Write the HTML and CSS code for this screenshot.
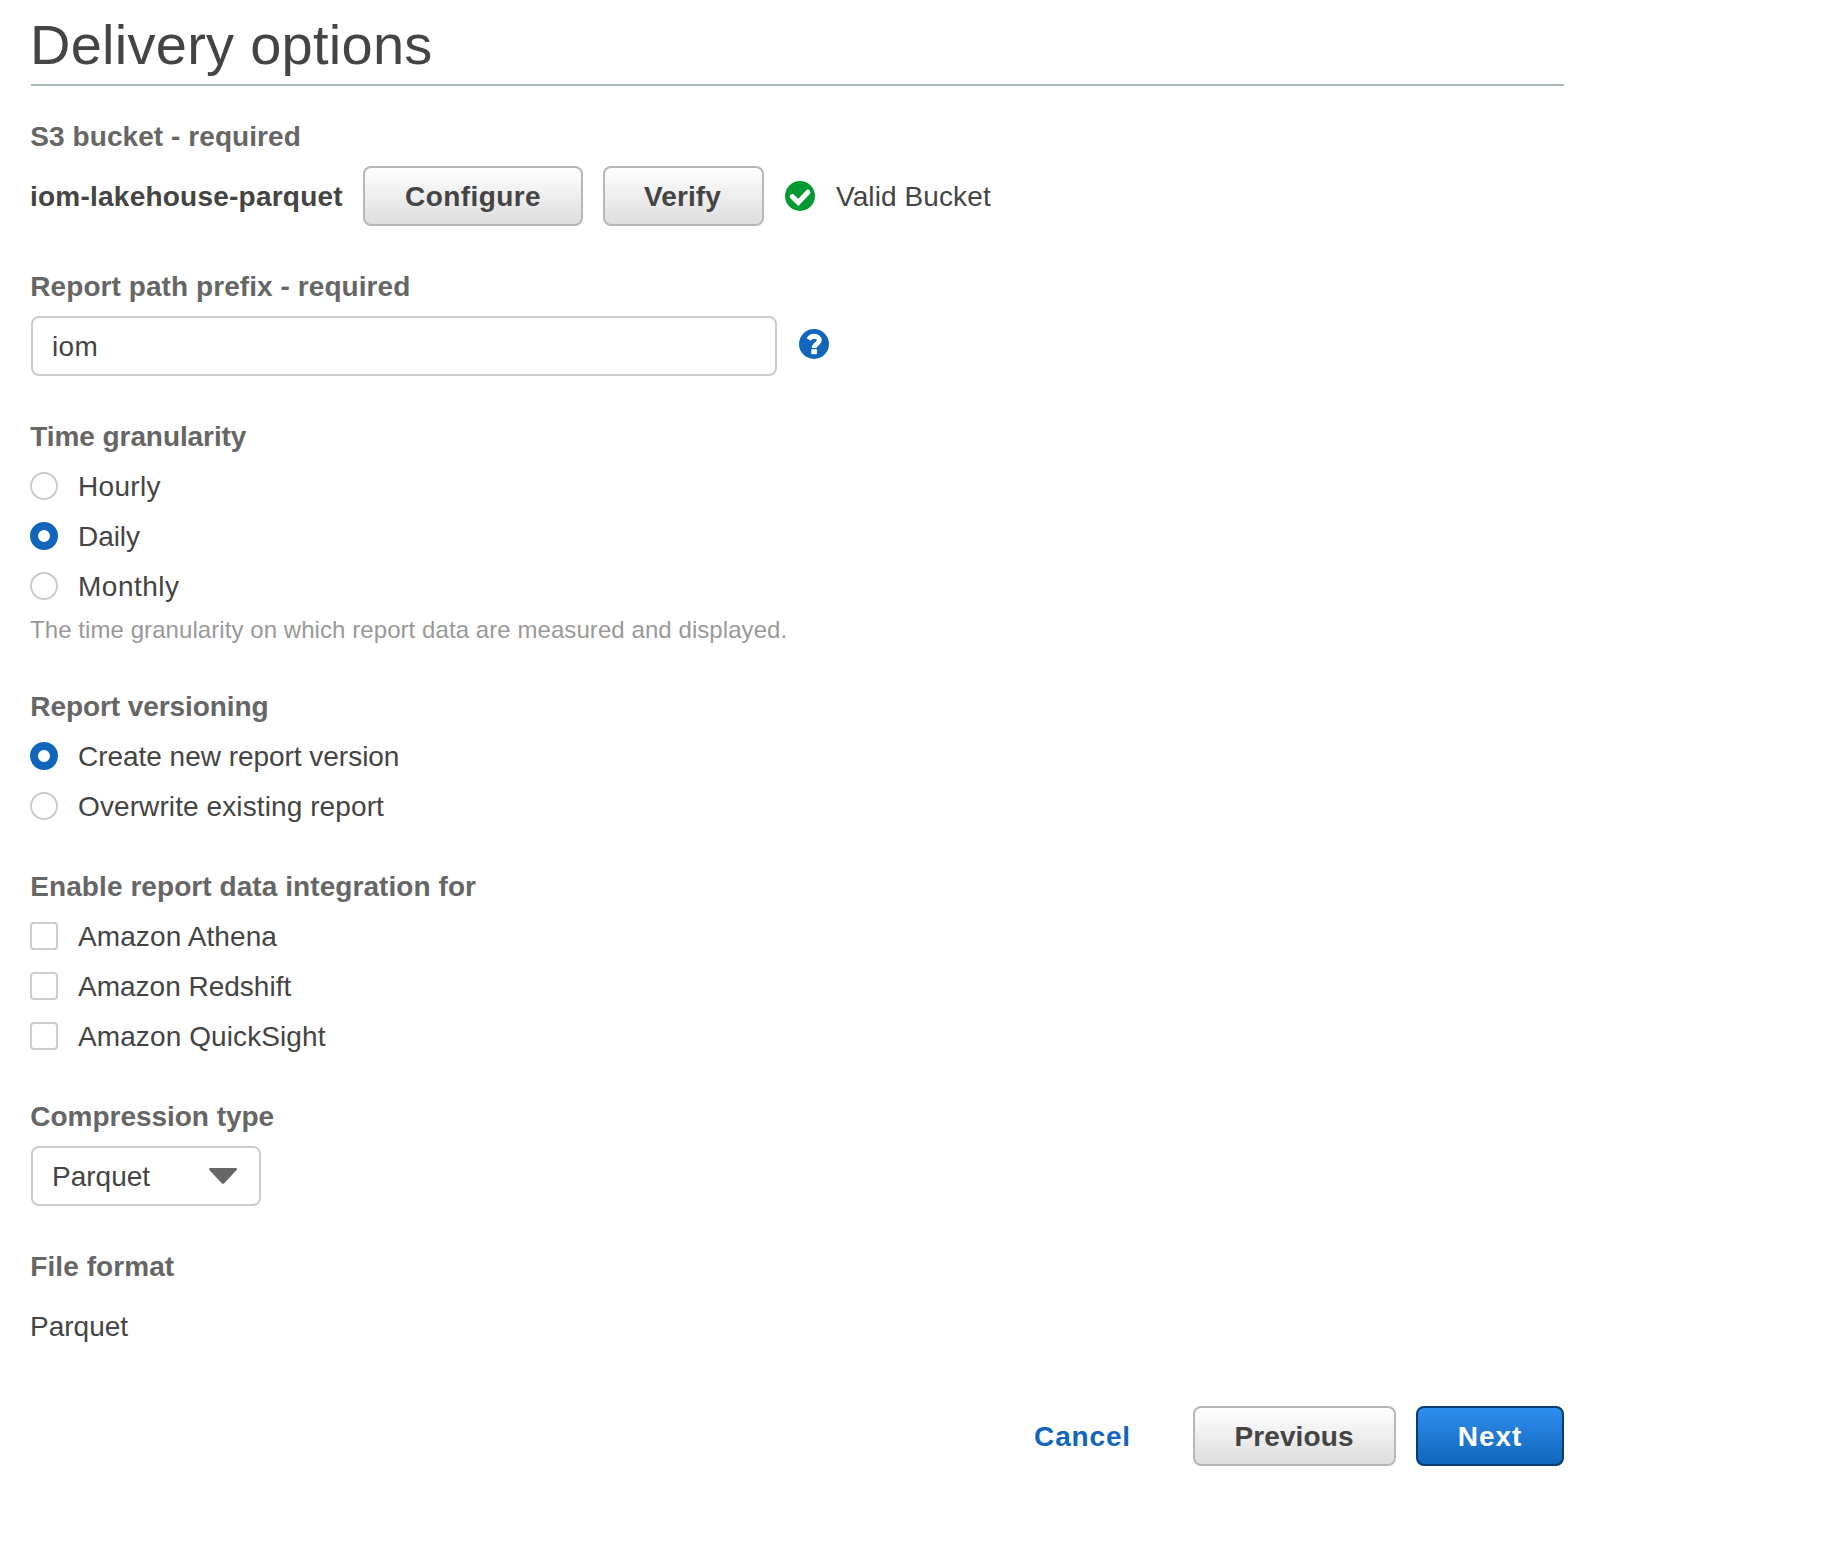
FILE: index.html
```html
<!DOCTYPE html>
<html lang="en">
<head>
<meta charset="utf-8">
<title>Delivery options</title>
<link rel="stylesheet" href="styles.css">
</head>
<body>
<main class="page">
  <h1 class="title">Delivery options</h1>

  <section class="group">
    <h2 class="label">S3 bucket - required</h2>
    <div class="row">
      <strong class="bucket text">iom-lakehouse-parquet</strong>
      <button class="btn btn-configure" type="button">Configure</button>
      <button class="btn btn-verify" type="button">Verify</button>
      <span class="status">
        <svg class="icon" viewBox="0 0 30 30" aria-hidden="true"><circle cx="15" cy="15" r="15" fill="#093"/><path d="M7.300 15.600l6 5.800L22.900 11.200" fill="none" stroke="#fff" stroke-width="5" stroke-linejoin="miter" stroke-linecap="round"/></svg>
        <span class="text">Valid Bucket</span>
      </span>
    </div>
  </section>

  <section class="group">
    <h2 class="label">Report path prefix - required</h2>
    <div class="row">
      <input class="input" type="text" value="iom" aria-label="Report path prefix">
      <svg class="icon help" viewBox="0 0 30 30" aria-hidden="true"><circle cx="15" cy="15" r="15" fill="#1166bb"/><path d="M9.700 10.500C11 8.400 12.700 7.300 15.100 7.300c3 0 5.200 1.500 5.200 4 0 3.500-5.200 3.700-5.200 7.700" fill="none" stroke="#fff" stroke-width="4.900"/><path d="M12.300 20.200h5.600v5h-5.600z" fill="#fff"/></svg>
    </div>
  </section>

  <section class="group">
    <h2 class="label tight">Time granularity</h2>
    <div class="options">
      <label class="option"><input class="radio" type="radio" name="time"><span class="text loose">Hourly</span></label>
      <label class="option"><input class="radio" type="radio" name="time" checked><span class="text tight">Daily</span></label>
      <label class="option"><input class="radio" type="radio" name="time"><span class="text looser">Monthly</span></label>
    </div>
    <p class="hint">The time granularity on which report data are measured and displayed.</p>
  </section>

  <section class="group">
    <h2 class="label tight">Report versioning</h2>
    <div class="options">
      <label class="option"><input class="radio" type="radio" name="version" checked><span class="text snug">Create new report version</span></label>
      <label class="option"><input class="radio" type="radio" name="version"><span class="text">Overwrite existing report</span></label>
    </div>
  </section>

  <section class="group">
    <h2 class="label">Enable report data integration for</h2>
    <div class="options">
      <label class="option"><input class="checkbox" type="checkbox"><span class="text">Amazon Athena</span></label>
      <label class="option"><input class="checkbox" type="checkbox"><span class="text plain">Amazon Redshift</span></label>
      <label class="option"><input class="checkbox" type="checkbox"><span class="text">Amazon QuickSight</span></label>
    </div>
  </section>

  <section class="group">
    <h2 class="label snug">Compression type</h2>
    <div class="row">
      <button class="select" type="button">
        <span class="text">Parquet</span>
        <svg class="caret" viewBox="0 0 28 16" aria-hidden="true"><path d="M1.300 0h25.400c1.200 0 1.700 1.200.9 2.100L15.300 15.200c-.8.800-1.800.8-2.600 0L.4 2.100C-.4 1.200.1 0 1.300 0z" fill="#666"/></svg>
      </button>
    </div>
  </section>

  <section class="group">
    <h2 class="label">File format</h2>
    <div class="row"><span class="text value">Parquet</span></div>
  </section>

  <footer class="actions">
    <a class="cancel text">Cancel</a>
    <button class="btn btn-previous" type="button">Previous</button>
    <button class="btn btn-next" type="button">Next</button>
  </footer>
</main>
</body>
</html>
```
FILE: styles.css
```css
* {
  box-sizing: border-box;
}

body {
  margin: 0;
  background: #fff;
  color: #444;
  font: 28px/40px "Liberation Sans", Arial, sans-serif;
  letter-spacing: 0.1px;
}

.page {
  width: 1564px;
  padding: 12px 0 0 31px;
}

.title {
  height: 74px;
  margin: 0 0 30px;
  border-bottom: 2px solid #a8b7b7;
  font-size: 56px;
  font-weight: 400;
  line-height: 66px;
  letter-spacing: 0.26px;
  text-indent: -1px;
}

.group {
  margin-bottom: 40px;
}

.label {
  height: 40px;
  margin: 0 0 10px;
  color: #666;
  font-size: 28px;
  font-weight: 700;
  line-height: 42px;
  letter-spacing: 0.07px;
  text-indent: -0.7px;
}

/* Optical baseline: text sits one pixel below the centre of its row. */
.text {
  padding-top: 2px;
}

.snug { letter-spacing: -0.03px; }
.tight { letter-spacing: -0.08px; }
.plain { letter-spacing: 0; }
.loose { letter-spacing: 0.32px; }
.looser { letter-spacing: 0.5px; }

.row {
  display: flex;
  align-items: center;
  height: 60px;
}

.bucket {
  width: 332px;
  letter-spacing: 0.23px;
  text-indent: -1px;
}

.btn {
  height: 60px;
  padding: 2px 0 0;
  border: 2px solid #b7b7b7;
  border-radius: 8px;
  background: linear-gradient(#fff, #ddd);
  color: #444;
  font: 700 28px/40px "Liberation Sans", Arial, sans-serif;
  letter-spacing: 0.12px;
}

.btn-configure {
  width: 220px;
  letter-spacing: 0.42px;
}

.btn-verify {
  width: 161px;
  margin-left: 20px;
  padding-right: 2px;
}

.status {
  display: flex;
  align-items: center;
  gap: 21px;
  margin-left: 21px;
}

.icon {
  flex: none;
  display: block;
  width: 30px;
  height: 30px;
}

.input {
  width: 746px;
  height: 60px;
  padding: 2px 19px 0;
  border: 2px solid #ccc;
  border-radius: 8px;
  outline: 0;
  background: #fff;
  color: #444;
  font: 28px/40px "Liberation Sans", Arial, sans-serif;
  letter-spacing: 0.4px;
}

.help {
  margin: 0 0 4px 22px;
}

.options {
  display: grid;
  gap: 10px;
}

.option {
  display: flex;
  align-items: center;
  gap: 20px;
  height: 40px;
  margin-left: -1px;
}

.radio,
.checkbox {
  flex: none;
  appearance: none;
  width: 28px;
  height: 28px;
  margin: 0;
  border: 2px solid #ccc;
  background: #fff;
}

.radio {
  border-radius: 50%;
}

.radio:checked {
  border: 8px solid #16b;
}

.checkbox {
  border-radius: 4px;
}

.hint {
  margin: 8px 0 0;
  color: #999;
  font-size: 24px;
  line-height: 32px;
  letter-spacing: 0.07px;
  text-indent: -1px;
}

.select {
  display: flex;
  align-items: center;
  justify-content: space-between;
  width: 230px;
  height: 60px;
  padding: 0 22px 0 19px;
  border: 2px solid #ccc;
  border-radius: 8px;
  background: #fff;
  color: #444;
  font: 28px/40px "Liberation Sans", Arial, sans-serif;
}

.caret {
  width: 28px;
  height: 16px;
}

.value {
  letter-spacing: 0;
  text-indent: -1px;
}

.actions {
  display: flex;
  align-items: center;
  justify-content: flex-end;
  gap: 20px;
  margin-top: 50px;
}

.cancel {
  margin-right: 42px;
  color: #16b;
  font-weight: 700;
  letter-spacing: 0.85px;
}

.btn-previous {
  width: 203px;
  padding-right: 1px;
}

.btn-next {
  width: 148px;
  border-color: #0a3c71;
  background: linear-gradient(#2e8eee, #16b);
  color: #fff;
  letter-spacing: 0.9px;
}
```
